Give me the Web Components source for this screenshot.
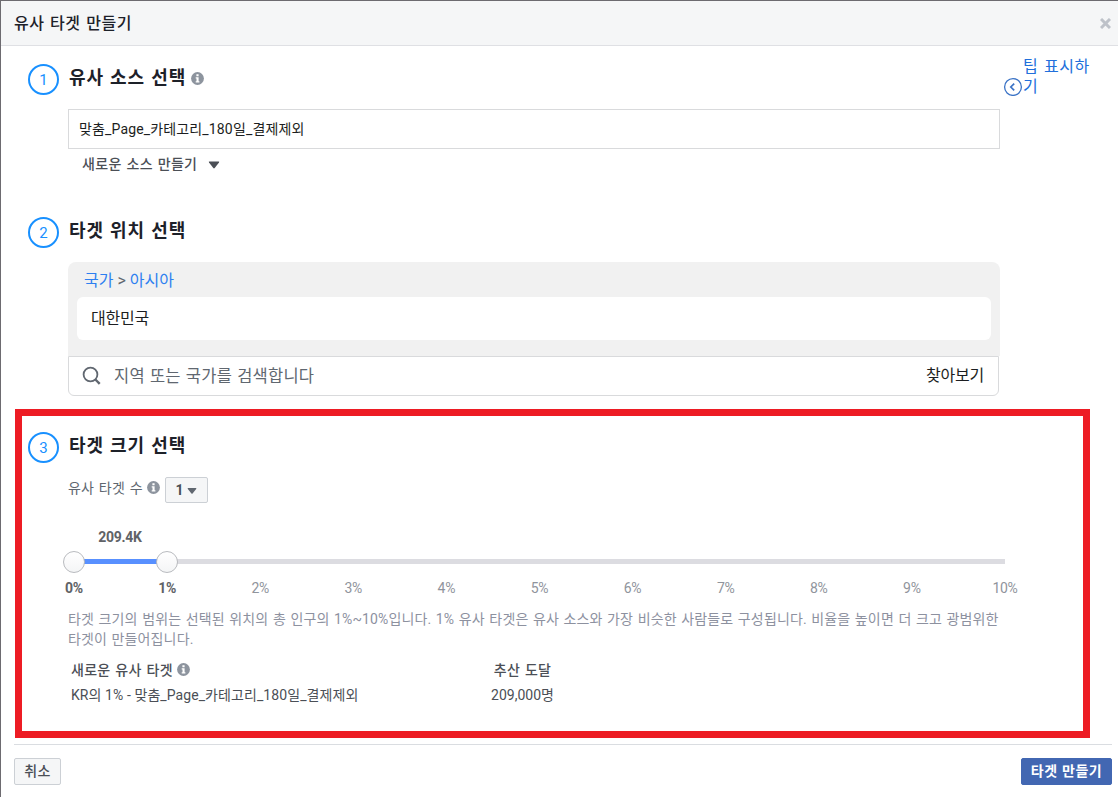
<!DOCTYPE html>
<html lang="ko">
<head>
<meta charset="utf-8">
<title>유사 타겟 만들기</title>
<style>
  html, body {
    margin: 0;
    height: 100%;
    background: #fff;
  }
  body {
    font-family: Roboto, "Noto Sans CJK KR", sans-serif;
    font-size: 13px;
    color: #4b4f56;
    overflow: hidden;
  }
</style>
</head>
<body>
<audience-dialog></audience-dialog>

<script>
const define = (name, html, setup) => {
  const template = document.createElement("template");
  template.innerHTML = html;

  window.customElements.define(name, class extends HTMLElement {
    constructor() {
      super();
      this.attachShadow({mode: "open"});
      this.shadowRoot.appendChild(template.content.cloneNode(true));
    }

    connectedCallback() {
      setup && setup(this, this.shadowRoot);
    }
  });
};

define("info-icon", `
    <style>
      :host {
        display: inline-block;
        width: 13px;
        height: 13px;
      }
      svg {
        display: block;
      }
    </style>
    <svg width="13" height="13" viewBox="0 0 13 13">
      <circle cx="6.5" cy="6.5" r="6.4" fill="#8d949e"/>
      <path d="M5.4 2.3h2.2v1.9H5.4zM4.7 5.2h2.9v4h.8v1.2H4.7V9.2h.8V6.4h-.8z" fill="#fff"/>
    </svg>
`);

define("caret-icon", `
    <style>
      :host {
        display: inline-block;
      }
      svg {
        display: block;
      }
    </style>
    <svg width="12" height="8" viewBox="0 0 12 8">
      <path d="M1.3.5h9.4q.9.2.3 1L6.7 7q-.7.8-1.4 0L1 1.5Q.4.7 1.3.5z" fill="currentColor"/>
    </svg>
`, (host, root) => {
  const size = host.getAttribute("size");
  size && root.querySelector("svg").setAttribute("width", size);
});

define("step-section", `
    <style>
      :host {
        display: flex;
        box-sizing: border-box;
      }
      .num {
        flex: none;
        box-sizing: border-box;
        width: 31px;
        height: 31px;
        margin-right: 9px;
        border: 2px solid #1890ff;
        border-radius: 50%;
        color: #1890ff;
        font-size: 15px;
        line-height: 28px;
        text-align: center;
      }
      .content {
        flex: 1;
        min-width: 0;
      }
      .title {
        display: flex;
        align-items: center;
        height: 28px;
        margin-bottom: 17px;
        padding-left: 1px;
        font-size: 18px;
        font-weight: 700;
        letter-spacing: .9px;
        word-spacing: .8px;
        color: #1d2129;
        white-space: nowrap;
      }
      .title .text {
        padding-bottom: 4px;
      }
      .title ::slotted(info-icon) {
        margin-left: 5px;
      }
    </style>
    <div class="num"></div>
    <div class="content">
      <div class="title"><span class="text"></span><slot name="info"></slot></div>
      <slot></slot>
    </div>
`, (host, root) => {
  root.querySelector(".num").textContent = host.getAttribute("step");
  root.querySelector(".text").textContent = host.getAttribute("heading");
});

define("show-tips", `
    <style>
      :host {
        display: flex;
        align-items: flex-end;
        height: 40px;
        color: #216fdb;
        font-size: 16px;
        line-height: 20px;
        letter-spacing: .6px;
        word-spacing: 1px;
      }
      svg {
        flex: none;
        margin-bottom: 1px;
      }
      span {
        width: 74px;
      }
    </style>
    <svg width="20" height="20" viewBox="0 0 20 20" fill="none" stroke="#3b73c6">
      <circle cx="10" cy="11" r="8.4" stroke-width="1.3"/>
      <path d="M11.2 7.6L7.8 11l3.4 3.4" stroke-width="1.7"/>
    </svg>
    <span><slot></slot></span>
`);

define("source-picker", `
    <style>
      .field {
        box-sizing: border-box;
        width: 932px;
        height: 40px;
        padding-left: 10px;
        border: 1px solid #d9dadc;
        font-size: 14px;
        line-height: 38px;
        letter-spacing: .15px;
        color: #1c1e21;
      }
      .create {
        display: flex;
        align-items: center;
        height: 28px;
        padding-left: 14px;
        font-size: 14px;
        font-weight: 500;
        letter-spacing: .33px;
        word-spacing: 1px;
      }
      .create caret-icon {
        margin: 3px 0 0 11px;
      }
    </style>
    <div class="field"><slot></slot></div>
    <div class="create"><span>새로운 소스 만들기</span><caret-icon></caret-icon></div>
`);

define("location-picker", `
    <style>
      :host {
        display: block;
        width: 932px;
        font-size: 16px;
      }
      .box {
        box-sizing: border-box;
        height: 94px;
        padding: 0 9px;
        border-radius: 8px 8px 0 0;
        background: #f1f1f1;
      }
      .path {
        height: 35px;
        padding-left: 7px;
        line-height: 37px;
        color: #606770;
      }
      .path b {
        color: #2d7ff0;
        font-weight: 400;
      }
      .selected {
        height: 43px;
        padding-left: 14px;
        border-radius: 6px;
        background: #fff;
        line-height: 43px;
        letter-spacing: -.2px;
        color: #1c1e21;
      }
      .search {
        display: flex;
        align-items: center;
        box-sizing: border-box;
        width: 931px;
        height: 40px;
        padding: 0 14px 2px 13px;
        border: 1px solid #d9dadc;
        border-radius: 0 0 6px 6px;
        color: #606770;
      }
      .hint {
        flex: 1;
        margin-left: 12px;
        padding-bottom: 1px;
        font-size: 16.5px;
        letter-spacing: .25px;
        word-spacing: .7px;
      }
      .browse {
        padding-bottom: 2px;
        letter-spacing: -.2px;
        color: #1c1e21;
      }
    </style>
    <div class="box">
      <div class="path"><b>국가</b> &gt; <b>아시아</b></div>
      <div class="selected"><slot></slot></div>
    </div>
    <div class="search">
      <svg width="20" height="20" viewBox="0 0 20 20" fill="none" stroke="#606770">
        <circle cx="8.5" cy="9.5" r="6.9" stroke-width="1.8"/>
        <path d="M13.4 14.5l4.3 4.3" stroke-width="2.4"/>
      </svg>
      <span class="hint">지역 또는 국가를 검색합니다</span>
      <span class="browse">찾아보기</span>
    </div>
`);

define("ui-button", `
    <style>
      :host {
        display: flex;
        align-items: center;
        justify-content: center;
        box-sizing: border-box;
        height: 27px;
        border: 1px solid #ccd0d5;
        border-radius: 2px;
        background: #f5f6f7;
        color: #4b4f56;
        font-size: 14px;
        font-weight: 500;
        letter-spacing: .3px;
        white-space: nowrap;
      }
      :host([primary]) {
        border-color: #4267b2;
        background: #4267b2;
        color: #fff;
        font-weight: 700;
        letter-spacing: .5px;
        word-spacing: .6px;
      }
    </style>
    <slot></slot>
`);

define("percent-slider", `
    <style>
      :host {
        display: block;
        width: 931px;
        padding-left: 6px;
        color: #90949c;
      }
      .bubble {
        width: 92px;
        height: 20px;
        line-height: 20px;
        text-align: center;
        color: #606266;
        font-weight: 700;
      }
      .rail {
        display: flex;
        align-items: center;
        height: 29px;
      }
      .rail i {
        flex: none;
        box-sizing: border-box;
        width: 22px;
        height: 22px;
        margin: 0 -11px;
        border: 1px solid #b9bbbf;
        border-radius: 50%;
        background: linear-gradient(#fff, #f4f5f6);
        z-index: 1;
      }
      .fill, .rest {
        width: 93px;
        height: 5px;
        background: #5890ff;
      }
      .rest {
        flex: 1;
        background: #dcdce1;
      }
      .ticks {
        display: flex;
        justify-content: space-between;
        margin: 2px -20px 0;
        line-height: 20px;
      }
      .ticks span {
        width: 40px;
        text-align: center;
      }
      .ticks .on {
        color: #606266;
        font-weight: 700;
      }
    </style>
    <div class="bubble"><slot></slot></div>
    <div class="rail"><i></i><div class="fill"></div><i></i><div class="rest"></div></div>
    <div class="ticks"></div>
`, (host, root) => {
  const ticks = root.querySelector(".ticks");
  const value = Number(host.getAttribute("value"));
  for (let i = 0; i <= 10; i++) {
    const tick = document.createElement("span");
    tick.textContent = i + "%";
    if (i <= value) {
      tick.className = "on";
    }
    ticks.appendChild(tick);
  }
});

define("size-picker", `
    <style>
      :host {
        display: block;
        font-size: 14px;
      }
      .count {
        display: flex;
        height: 26px;
      }
      .count span {
        line-height: 23px;
        letter-spacing: .2px;
        word-spacing: 1px;
        color: #606770;
      }
      .count info-icon {
        margin: 4px 5px 0 4px;
      }
      .count ui-button {
        width: 43px;
        height: 26px;
      }
      .count caret-icon {
        margin: 1px 0 0 3px;
        color: #606770;
      }
      .count b {
        font-size: 14px;
      }
      percent-slider {
        margin-top: 24px;
        font-size: 14px;
        letter-spacing: -.3px;
      }
      p {
        width: 945px;
        margin: 11px 0 0;
        line-height: 20px;
        letter-spacing: .13px;
        word-spacing: .95px;
        white-space: nowrap;
        color: #8d919f;
      }
      .table {
        display: grid;
        grid-template-columns: 401px 100px;
        justify-items: start;
        margin: 9px 0 0 3px;
        line-height: 25px;
      }
      .table .head {
        display: flex;
        align-items: center;
        font-weight: 500;
        letter-spacing: .3px;
        word-spacing: 1px;
      }
      .table info-icon {
        margin: 0 0 3px 4px;
      }
      .table .name {
        letter-spacing: .08px;
      }
      .table .reach {
        width: 101px;
        text-align: center;
        justify-content: center;
      }
    </style>
    <div class="count">
      <span>유사 타겟 수</span>
      <info-icon></info-icon>
      <ui-button><b>1</b><caret-icon size="10"></caret-icon></ui-button>
    </div>
    <percent-slider value="1">209.4K</percent-slider>
    <p>타겟 크기의 범위는 선택된 위치의 총 인구의 1%~10%입니다. 1% 유사 타겟은 유사 소스와 가장 비슷한 사람들로 구성됩니다. 비율을 높이면 더 크고 광범위한<br>타겟이 만들어집니다.</p>
    <div class="table">
      <div class="head"><span>새로운 유사 타겟</span><info-icon></info-icon></div>
      <div class="head reach">추산 도달</div>
      <div class="name">KR의 1% - 맞춤_Page_카테고리_180일_결제제외</div>
      <div class="reach">209,000명</div>
    </div>
`);

define("audience-dialog", `
    <style>
      :host {
        display: flex;
        flex-direction: column;
        box-sizing: border-box;
        height: 797px;
        border: solid #6d6b70;
        border-width: 1px 0 0 1px;
      }
      header {
        display: flex;
        align-items: center;
        justify-content: space-between;
        box-sizing: border-box;
        height: 45px;
        padding: 0 7px 0 13px;
        border-bottom: 1px solid #dfe0e4;
        background: #f5f6f7;
        color: #1d2129;
        font-size: 16px;
        font-weight: 500;
        letter-spacing: .55px;
        word-spacing: 1px;
      }
      header span {
        padding-bottom: 2px;
      }
      .row {
        display: flex;
        height: 153px;
        margin: 18px 0 0 27px;
      }
      .row step-section {
        width: 975px;
      }
      show-tips {
        margin-top: -7px;
      }
      .place {
        height: 192px;
        margin-left: 27px;
      }
      .size {
        width: 1075px;
        height: 329px;
        margin-left: 14px;
        padding: 16px 0 0 6px;
        border: 7px solid #ed1c24;
      }
      footer {
        display: flex;
        justify-content: space-between;
        margin: 6px 6px 0 13px;
        padding-top: 13px;
        border-top: 1px solid #dadde1;
      }
      footer ui-button {
        padding-bottom: 3px;
      }
      .cancel {
        width: 47px;
      }
      .submit {
        width: 91px;
      }
    </style>
    <header>
      <span>유사 타겟 만들기</span>
      <svg width="11" height="11" viewBox="0 0 11 11" stroke="#bec2c9" stroke-width="3"><path d="M1 1l9 9M10 1l-9 9"/></svg>
    </header>
    <div class="row">
      <step-section step="1" heading="유사 소스 선택">
        <info-icon slot="info"></info-icon>
        <source-picker>맞춤_Page_카테고리_180일_결제제외</source-picker>
      </step-section>
      <show-tips>팁 표시하기</show-tips>
    </div>
    <step-section class="place" step="2" heading="타겟 위치 선택">
      <location-picker>대한민국</location-picker>
    </step-section>
    <step-section class="size" step="3" heading="타겟 크기 선택">
      <size-picker></size-picker>
    </step-section>
    <footer>
      <ui-button class="cancel">취소</ui-button>
      <ui-button class="submit" primary>타겟 만들기</ui-button>
    </footer>
`);
</script>
</body>
</html>
